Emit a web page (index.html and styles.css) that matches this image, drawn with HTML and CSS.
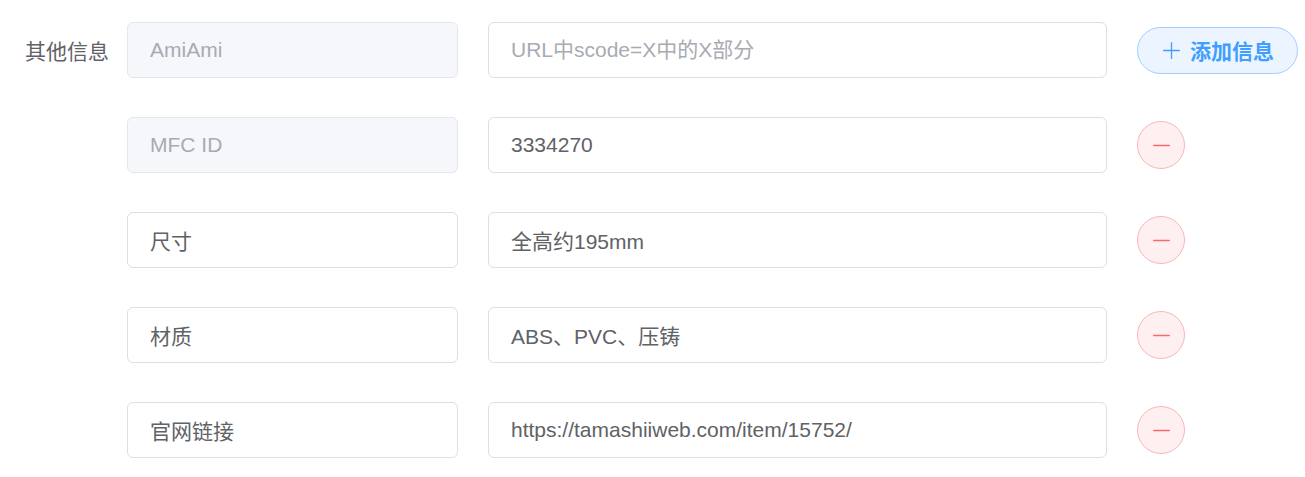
FILE: index.html
```html
<!DOCTYPE html>
<html lang="zh-CN">
<head>
    <meta charset="UTF-8">
    <title>其他信息</title>
    <link rel="stylesheet" href="styles.css">
</head>
<body>
    <form class="info-form">
        <div class="form-item">
            <label class="form-label">其他信息</label>
            <div class="form-content">
                <div class="info-row">
                    <input class="input input-key" type="text" value="AmiAmi" disabled>
                    <input class="input input-value" type="text" placeholder="URL中scode=X中的X部分">
                    <button type="button" class="btn btn-add">
                        <svg class="icon" viewBox="0 0 1024 1024"><path fill="currentColor" d="M480 480V128a32 32 0 0 1 64 0v352h352a32 32 0 1 1 0 64H544v352a32 32 0 1 1-64 0V544H128a32 32 0 0 1 0-64h352z"/></svg>
                        <span>添加信息</span>
                    </button>
                </div>
                <div class="info-row">
                    <input class="input input-key" type="text" value="MFC ID" disabled>
                    <input class="input input-value" type="text" value="3334270">
                    <button type="button" class="btn btn-remove">
                        <svg class="icon" viewBox="0 0 1024 1024"><path fill="currentColor" d="M128 544h768a32 32 0 1 0 0-64H128a32 32 0 0 0 0 64z"/></svg>
                    </button>
                </div>
                <div class="info-row">
                    <input class="input input-key" type="text" value="尺寸">
                    <input class="input input-value" type="text" value="全高约195mm">
                    <button type="button" class="btn btn-remove">
                        <svg class="icon" viewBox="0 0 1024 1024"><path fill="currentColor" d="M128 544h768a32 32 0 1 0 0-64H128a32 32 0 0 0 0 64z"/></svg>
                    </button>
                </div>
                <div class="info-row">
                    <input class="input input-key" type="text" value="材质">
                    <input class="input input-value" type="text" value="ABS、PVC、压铸">
                    <button type="button" class="btn btn-remove">
                        <svg class="icon" viewBox="0 0 1024 1024"><path fill="currentColor" d="M128 544h768a32 32 0 1 0 0-64H128a32 32 0 0 0 0 64z"/></svg>
                    </button>
                </div>
                <div class="info-row">
                    <input class="input input-key" type="text" value="官网链接">
                    <input class="input input-value" type="text" value="https://tamashiiweb.com/item/15752/">
                    <button type="button" class="btn btn-remove">
                        <svg class="icon" viewBox="0 0 1024 1024"><path fill="currentColor" d="M128 544h768a32 32 0 1 0 0-64H128a32 32 0 0 0 0 64z"/></svg>
                    </button>
                </div>
            </div>
        </div>
    </form>
</body>
</html>
```

FILE: styles.css
```css
/* Global Styles */
* {
    margin: 0;
    padding: 0;
    box-sizing: border-box;
    font-family: 'Liberation Sans', 'Noto Sans CJK SC', sans-serif;
}

body {
    background: #ffffff;
    color: #606266;
    padding-top: 22px;
}

/* Form Layout */
.form-item {
    display: flex;
    align-items: flex-start;
}

.form-label {
    width: 127px;
    height: 56px;
    padding-right: 18px;
    display: flex;
    align-items: center;
    justify-content: flex-end;
    font-size: 21px;
    color: #606266;
}

.form-content {
    display: flex;
    flex-direction: column;
    gap: 39px;
}

.info-row {
    display: flex;
    align-items: center;
    gap: 30px;
}

/* Inputs */
.input {
    height: 56px;
    padding: 0 22px;
    border: 1px solid #dcdfe6;
    border-radius: 6px;
    background: #ffffff;
    color: #606266;
    font-size: 21px;
    outline: none;
}

.input::placeholder {
    color: #a8abb2;
}

.input:disabled {
    background: #f5f7fa;
    border-color: #e4e7ed;
    color: #a8abb2;
    -webkit-text-fill-color: #a8abb2;
}

.input-key {
    width: 331px;
}

.input-value {
    width: 619px;
}

/* Buttons */
.btn {
    display: inline-flex;
    align-items: center;
    justify-content: center;
    border: 1px solid;
    cursor: pointer;
    font-size: 21px;
}

.icon {
    width: 21px;
    height: 21px;
}

.btn-add {
    height: 47px;
    padding: 0 23px;
    border-radius: 24px;
    background: #ecf5ff;
    border-color: #a0cfff;
    color: #409eff;
    font-weight: 700;
}

.btn-add span {
    margin-left: 8px;
}

.btn-remove {
    width: 48px;
    height: 48px;
    border-radius: 50%;
    background: #fef0f0;
    border-color: #fab6b6;
    color: #f56c6c;
}
```
